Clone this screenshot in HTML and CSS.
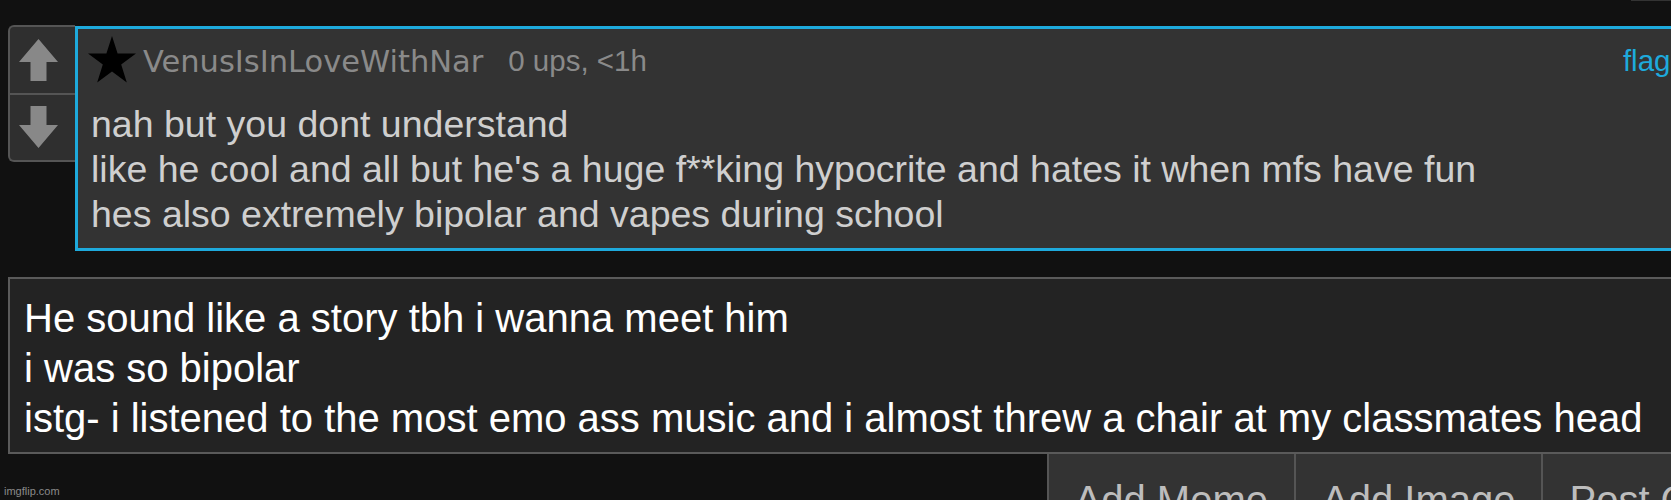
FILE: index.html
```html
<!DOCTYPE html>
<html>
<head>
<meta charset="utf-8">
<link rel="stylesheet" href="styles.css">
</head>
<body>
<div class="page">
  <div class="comment-row">
    <div class="votes">
      <div class="vote vote-up">
        <svg width="39" height="42" viewBox="0 0 39 42"><path d="M19.5 0 L39 23 L27.5 23 L27.5 42 L11.5 42 L11.5 23 L0 23 Z" fill="#888"/></svg>
      </div>
      <div class="vote vote-down">
        <svg width="39" height="42" viewBox="0 0 39 42"><path d="M19.5 42 L39 19 L27.5 19 L27.5 0 L11.5 0 L11.5 19 L0 19 Z" fill="#888"/></svg>
      </div>
    </div>
    <div class="comment">
      <div class="comment-head">
        <svg class="star" width="48" height="47" viewBox="0 0 48 47"><polygon points="24,0 29.6,17.6 48,17.6 33.2,28.6 38.8,46.5 24,35.5 9.2,46.5 14.8,28.6 0,17.6 18.4,17.6" fill="#000"/></svg>
        <span class="user">VenusIsInLoveWithNar</span>
        <span class="meta">0 ups, &lt;1h</span>
        <span class="flag">flag</span>
      </div>
      <div class="comment-text">nah but you dont understand<br>like he cool and all but he's a huge f**king hypocrite and hates it when mfs have fun<br>hes also extremely bipolar and vapes during school</div>
    </div>
  </div>
  <div class="reply">He sound like a story tbh i wanna meet him<br>i was so bipolar<br>istg- i listened to the most emo ass music and i almost threw a chair at my classmates head</div>
  <div class="buttons">
    <div class="btn">Add Meme</div>
    <div class="btn">Add Image</div>
    <div class="btn">Post Comment</div>
  </div>
</div>
<div class="top-edge"></div>
<div class="watermark">imgflip.com</div>
</body>
</html>
```
FILE: styles.css
```css
html, body {
  margin: 0;
  padding: 0;
  background: #111;
  overflow: hidden;
  height: 500px;
}
.page {
  width: 1852px;
  padding: 25px 0 0 8px;
  font-family: "Liberation Sans", Arial, sans-serif;
}
.comment-row {
  display: flex;
  align-items: flex-start;
}
.votes {
  width: 65px;
  height: 133px;
  border: 2px solid #555;
  border-right: none;
  border-radius: 6px 0 0 6px;
  background: #2f2f2f;
  display: flex;
  flex-direction: column;
}
.vote {
  flex: 1;
  display: flex;
  align-items: center;
  justify-content: center;
  padding-right: 8px;
}
.vote-up {
  border-bottom: 2px solid #555;
}
.comment {
  flex: 1;
  margin-top: 1px;
  border: 3px solid #1eaadc;
  background: #333;
  padding: 6px 0 11px 10px;
}
.comment-head {
  display: flex;
  align-items: center;
  height: 48px;
}
.star {
  display: block;
  margin-right: 7px;
}
.user {
  font-family: "DejaVu Sans", Verdana, sans-serif;
  font-size: 30.5px;
  color: #8a8a8a;
  margin-right: 25px;
  margin-top: 5px;
}
.meta {
  font-size: 29.5px;
  color: #8a8a8a;
  margin-top: 3px;
}
.flag {
  font-size: 29.5px;
  color: #1eaadc;
  margin-left: 976px;
  margin-top: 3px;
}
.comment-text {
  margin-top: 19px;
  padding-left: 3px;
  font-size: 37.5px;
  line-height: 45px;
  color: #cfcfcf;
}
.reply {
  margin-top: 26px;
  border: 2px solid #5a5a5a;
  background: #232323;
  padding: 14px 0 9px 14px;
  font-size: 40px;
  line-height: 50px;
  color: #fff;
}
.buttons {
  display: flex;
  justify-content: flex-end;
}
.btn {
  background: #333;
  border: 2px solid #555;
  border-top: none;
  border-right: none;
  padding: 22px 26px;
  font-size: 40px;
  line-height: 48px;
  color: #bdbdbd;
}
.top-edge {
  position: absolute;
  top: 0;
  right: 0;
  width: 40px;
  height: 1px;
  background: #333;
}
.watermark {
  position: absolute;
  left: 4px;
  bottom: 3px;
  font-family: "Liberation Sans", Arial, sans-serif;
  font-size: 11px;
  color: #8a8a8a;
}
```
